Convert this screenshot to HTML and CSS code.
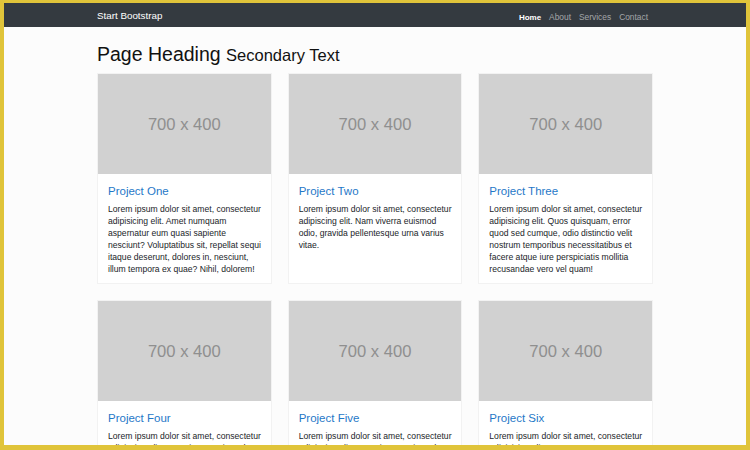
FILE: index.html
```html
<!DOCTYPE html>
<html lang="en">
  <head>
    <meta charset="UTF-8" />
    <meta name="viewport" content="width=device-width, initial-scale=1.0" />
    <title>Start Bootstrap - Portfolio</title>
    <link rel="stylesheet" href="styles.css">
  </head>
  <body>
    <div class="frame">
      <nav class="navbar">
        <div class="container nav-inner">
          <a class="brand" href="#">Start Bootstrap</a>
          <ul class="nav-links">
            <li><a class="active" href="#">Home</a></li>
            <li><a href="#">About</a></li>
            <li><a href="#">Services</a></li>
            <li><a href="#">Contact</a></li>
          </ul>
        </div>
      </nav>

      <div class="container">
        <h1 class="page-heading">Page Heading <small>Secondary Text</small></h1>

        <div class="grid">
          <div class="card">
            <div class="card-img">700 x 400</div>
            <div class="card-body">
              <h4 class="card-title"><a href="#">Project One</a></h4>
              <p class="card-text">Lorem ipsum dolor sit amet, consectetur adipisicing elit. Amet numquam aspernatur eum quasi sapiente nesciunt? Voluptatibus sit, repellat sequi itaque deserunt, dolores in, nesciunt, illum tempora ex quae? Nihil, dolorem!</p>
            </div>
          </div>
          <div class="card">
            <div class="card-img">700 x 400</div>
            <div class="card-body">
              <h4 class="card-title"><a href="#">Project Two</a></h4>
              <p class="card-text">Lorem ipsum dolor sit amet, consectetur adipiscing elit. Nam viverra euismod odio, gravida pellentesque urna varius vitae.</p>
            </div>
          </div>
          <div class="card">
            <div class="card-img">700 x 400</div>
            <div class="card-body">
              <h4 class="card-title"><a href="#">Project Three</a></h4>
              <p class="card-text">Lorem ipsum dolor sit amet, consectetur adipisicing elit. Quos quisquam, error quod sed cumque, odio distinctio velit nostrum temporibus necessitatibus et facere atque iure perspiciatis mollitia recusandae vero vel quam!</p>
            </div>
          </div>
          <div class="card">
            <div class="card-img">700 x 400</div>
            <div class="card-body">
              <h4 class="card-title"><a href="#">Project Four</a></h4>
              <p class="card-text">Lorem ipsum dolor sit amet, consectetur adipiscing elit. Nam viverra euismod odio, gravida pellentesque urna varius vitae.</p>
            </div>
          </div>
          <div class="card">
            <div class="card-img">700 x 400</div>
            <div class="card-body">
              <h4 class="card-title"><a href="#">Project Five</a></h4>
              <p class="card-text">Lorem ipsum dolor sit amet, consectetur adipiscing elit. Nam viverra euismod odio, gravida pellentesque urna varius vitae.</p>
            </div>
          </div>
          <div class="card">
            <div class="card-img">700 x 400</div>
            <div class="card-body">
              <h4 class="card-title"><a href="#">Project Six</a></h4>
              <p class="card-text">Lorem ipsum dolor sit amet, consectetur adipisicing elit. Itaque earum nostrum suscipit ducimus nihil provident, perferendis rem illo, voluptate atque, sit eius in voluptates, nemo repellat fugiat excepturi! Nemo, esse.</p>
            </div>
          </div>
        </div>
      </div>
    </div>
  </body>
</html>
```

FILE: styles.css
```css
body {
  margin: 0;
  font-family: "Liberation Sans", Arial, sans-serif;
  color: #212529;
  background-color: #e0c43a;
}

.frame {
  height: 450px;
  box-sizing: border-box;
  border-style: solid;
  border-color: #e0c43a;
  border-width: 3px 4px 5px 4px;
  background-color: #fcfcfc;
  overflow: hidden;
}

.container {
  width: 556px;
  margin: 0 auto;
}

/* top navigation */
.navbar {
  background-color: #343a40;
  height: 24px;
}

.nav-inner {
  display: flex;
  align-items: center;
  justify-content: space-between;
  height: 100%;
}

.brand {
  color: #fff;
  font-size: 9.8px;
  text-decoration: none;
}

.nav-links {
  display: flex;
  list-style: none;
  margin: 0;
  padding: 0;
  gap: 8px;
  margin-right: 5px;
}

.nav-links a {
  color: rgba(255, 255, 255, 0.55);
  font-size: 8.4px;
  text-decoration: none;
}

.nav-links a.active {
  color: #fff;
  font-weight: bold;
  font-size: 8px;
}

/* heading */
.page-heading {
  font-size: 19.5px;
  font-weight: 400;
  line-height: 1.2;
  margin: 16px 0 7px;
  color: #111;
}

.page-heading small {
  font-size: 16.5px;
}

/* project cards */
.grid {
  display: grid;
  grid-template-columns: repeat(3, 1fr);
  column-gap: 16px;
  row-gap: 16px;
}

.card {
  background-color: #fff;
  border: 1px solid rgba(0, 0, 0, 0.05);
}

.card-img {
  height: 100px;
  background-color: #d1d1d1;
  color: #8f8f8f;
  font-size: 16.6px;
  padding-top: 2px;
  box-sizing: border-box;
  display: flex;
  align-items: center;
  justify-content: center;
}

.card-body {
  padding: 10px 7px 8px 10px;
}

.card-title {
  margin: 0 0 5px;
  font-size: 11.5px;
  font-weight: 400;
  line-height: 14px;
}

.card-title a {
  color: #1f78c8;
  text-decoration: none;
}

.card-text {
  margin: 0;
  font-size: 8.6px;
  line-height: 12px;
}
```
